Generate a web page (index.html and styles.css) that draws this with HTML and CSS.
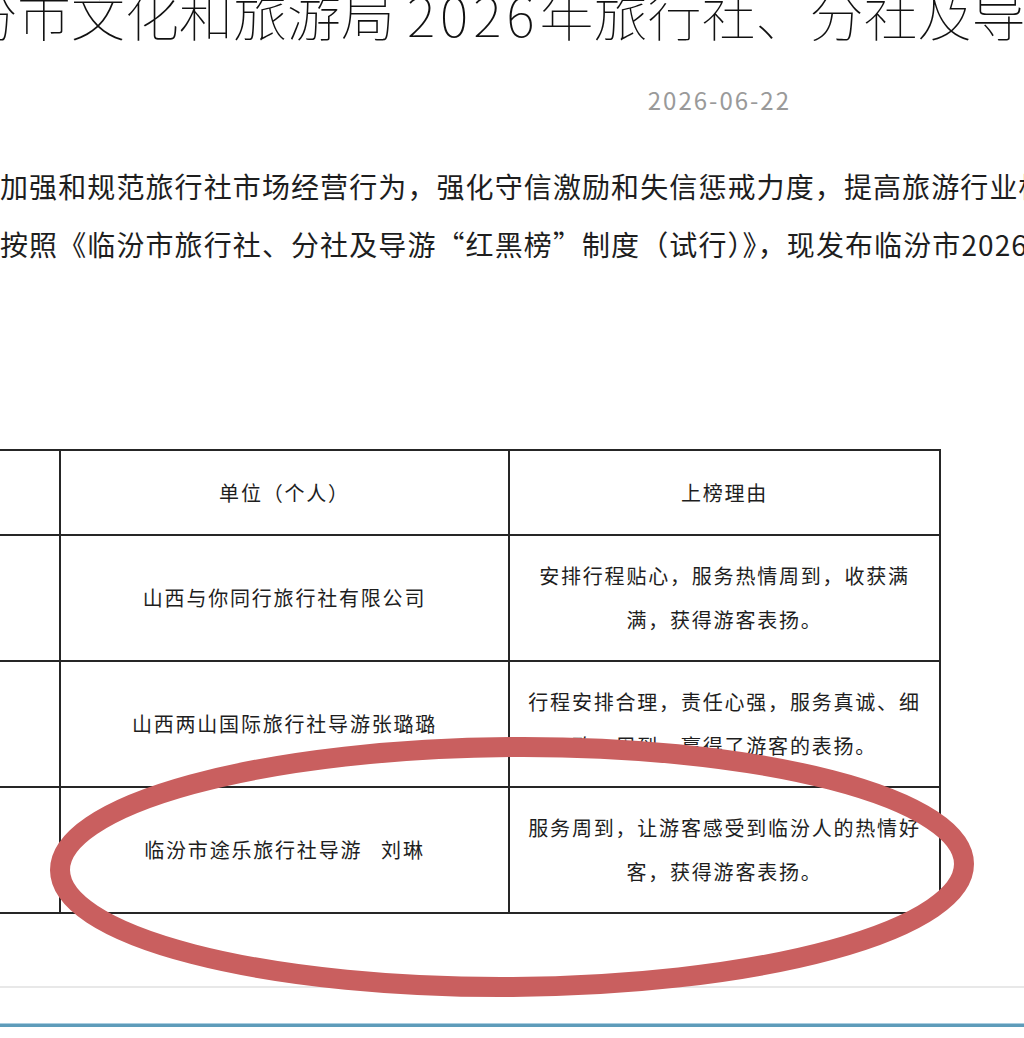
FILE: index.html
```html
<!DOCTYPE html>
<html lang="zh-CN">
<head>
<meta charset="utf-8">
<title>临汾市文化和旅游局 2026年旅行社、分社及导游“红黑榜”</title>
<link rel="stylesheet" href="styles.css">
</head>
<body>
<div class="page">
  <h1 class="title">临汾市文化和旅游局 <span class="num">2026</span>年旅行社、分社及导游“红黑榜”</h1>
  <div class="meta"><span class="date">2026-06-22</span></div>
  <div class="article">
    <p class="line">加强和规范旅行社市场经营行为，强化守信激励和失信惩戒力度，提高旅游行业标准化服务水平</p>
    <p class="line">按照《临汾市旅行社、分社及导游“红黑榜”制度（试行）》，现发布临汾市2026年</p>
  </div>
  <table class="list">
    <colgroup>
      <col class="c-no">
      <col class="c-unit">
      <col class="c-reason">
    </colgroup>
    <thead>
      <tr>
        <th class="no"></th>
        <th>单位（个人）</th>
        <th>上榜理由</th>
      </tr>
    </thead>
    <tbody>
      <tr>
        <td class="no"></td>
        <td>山西与你同行旅行社有限公司</td>
        <td>安排行程贴心，服务热情周到，收获满满，获得游客表扬。</td>
      </tr>
      <tr>
        <td class="no"></td>
        <td>山西两山国际旅行社导游张璐璐</td>
        <td>行程安排合理，责任心强，服务真诚、细致、周到，赢得了游客的表扬。</td>
      </tr>
      <tr>
        <td class="no"></td>
        <td>临汾市途乐旅行社导游&nbsp;&nbsp;&nbsp;刘琳</td>
        <td>服务周到，让游客感受到临汾人的热情好客，获得游客表扬。</td>
      </tr>
    </tbody>
  </table>
  <div class="divider"></div>
  <div class="bottom-bar"></div>
  <svg class="circle" width="1024" height="1038" viewBox="0 0 1024 1038" aria-hidden="true">
    <ellipse cx="512" cy="867" rx="452" ry="120" fill="none" stroke="#c95f5f" stroke-width="20" transform="rotate(-0.4 512 867)"/>
  </svg>
</div>
</body>
</html>
```
FILE: styles.css
```css
html, body {
  margin: 0;
  padding: 0;
  background: #ffffff;
}
body {
  width: 1024px;
  height: 1038px;
  overflow: hidden;
  font-family: "Noto Sans CJK SC", "Noto Sans", sans-serif;
  color: #1e1e1e;
}
.page {
  position: relative;
  width: 1024px;
  height: 1038px;
  overflow: hidden;
}
.title {
  margin: -13px 0 0 -91px;
  font-size: 54px;
  line-height: 54px;
  font-weight: 100;
  color: #111111;
  white-space: nowrap;
}
.title .num {
  letter-spacing: 5px;
}
.meta {
  display: flex;
  justify-content: flex-end;
  margin-top: 42px;
  padding-right: 233px;
  height: 34px;
}
.date {
  font-size: 24px;
  line-height: 34px;
  color: #9a9a9a;
  letter-spacing: 2px;
}
.article {
  margin-top: 40px;
}
.line {
  margin: 0;
  font-size: 28px;
  line-height: 58px;
  letter-spacing: 1.1px;
  white-space: nowrap;
  color: #1e1e1e;
}
.list {
  margin-top: 176px;
  width: 940px;
  table-layout: fixed;
  border-collapse: collapse;
  font-size: 20px;
  letter-spacing: 1.8px;
  color: #1e1e1e;
}
.c-no { width: 60px; }
.c-unit { width: 449px; }
.c-reason { width: 431px; }
.list th,
.list td {
  border: 2px solid #262626;
  text-align: center;
  vertical-align: middle;
  font-weight: 400;
  line-height: 44px;
  padding: 18px 15px;
}
.list th {
  padding: 19.5px 15px;
}
.list .no {
  border-left: none;
  padding: 0;
}
.divider {
  margin-top: 72px;
  height: 2px;
  background: #e8e8e8;
}
.bottom-bar {
  margin-top: 35px;
  height: 3px;
  background: #5e9cba;
  border-top: 1px solid #a9cde0;
}
.circle {
  position: absolute;
  left: 0;
  top: 0;
  pointer-events: none;
}
```
